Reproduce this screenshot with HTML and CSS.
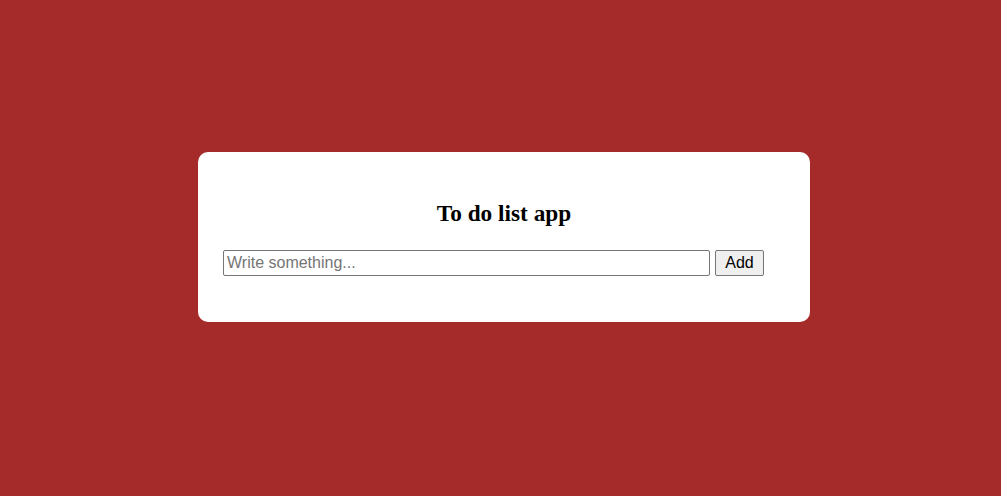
FILE: index.html
```html
<!DOCTYPE html>
<html>
<head>
<meta charset="utf-8">
<link rel="stylesheet" href="styles.css">
</head>
<body>
<div class="page">
  <div class="card">
    <h2 class="title">To do list app</h2>
    <div class="row">
      <input class="field" type="text" placeholder="Write something...">
      <button class="add">Add</button>
    </div>
  </div>
</div>
</body>
</html>
```
FILE: styles.css
```css
html, body {
  margin: 0;
  padding: 0;
  background: #a52a2a;
}
.page {
  padding: 152px 0 0 198px;
}
.card {
  width: 612px;
  height: 170px;
  box-sizing: border-box;
  background: #fff;
  border-radius: 10px;
  padding: 25px 25px 0 25px;
}
.title {
  margin: 22px 0 0 0;
  text-align: center;
  font-family: "Liberation Serif", "Times New Roman", serif;
  font-size: 23.3px;
  font-weight: bold;
  line-height: 28px;
  color: #000;
}
.row {
  display: flex;
  gap: 5px;
  margin-top: 23px;
}
.field {
  width: 487px;
  height: 26px;
  box-sizing: border-box;
  margin: 0;
  padding: 1px 3px;
  border: 1px solid #767676;
  border-radius: 2px;
  font-family: "Liberation Sans", Arial, sans-serif;
  font-size: 16px;
  color: #000;
  outline: none;
}
.field::placeholder {
  color: #757575;
}
.add {
  width: 49px;
  height: 26px;
  box-sizing: border-box;
  margin: 0;
  padding: 1px 6px;
  border: 1px solid #767676;
  border-radius: 2px;
  background: #efefef;
  font-family: "Liberation Sans", Arial, sans-serif;
  font-size: 16px;
  color: #000;
}
```
